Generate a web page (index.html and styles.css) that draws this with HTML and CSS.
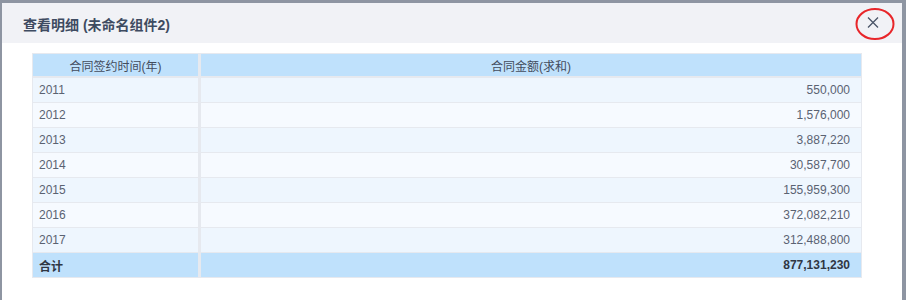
FILE: index.html
```html
<!DOCTYPE html>
<html lang="zh">
<head>
<meta charset="utf-8">
<link rel="stylesheet" href="styles.css">
</head>
<body>
<div class="dialog">
  <div class="dialog-header">
    <div class="title">查看明细 (未命名组件2)</div>
    <div class="close">
      <svg width="44" height="36" viewBox="0 0 44 36">
        <ellipse cx="22" cy="19" rx="18.5" ry="15" fill="none" stroke="#e8262a" stroke-width="2"/>
        <path d="M15 12.5 L25 22.5 M25 12.5 L15 22.5" stroke="#4a5568" stroke-width="1.3" fill="none"/>
      </svg>
    </div>
  </div>
  <div class="dialog-body">
    <div class="table">
      <div class="row head"><div class="cell c1">合同签约时间(年)</div><div class="cell c2">合同金额(求和)</div></div>
      <div class="row odd"><div class="cell">2011</div><div class="cell num">550,000</div></div>
      <div class="row even"><div class="cell">2012</div><div class="cell num">1,576,000</div></div>
      <div class="row odd"><div class="cell">2013</div><div class="cell num">3,887,220</div></div>
      <div class="row even"><div class="cell">2014</div><div class="cell num">30,587,700</div></div>
      <div class="row odd"><div class="cell">2015</div><div class="cell num">155,959,300</div></div>
      <div class="row even"><div class="cell">2016</div><div class="cell num">372,082,210</div></div>
      <div class="row odd"><div class="cell">2017</div><div class="cell num">312,488,800</div></div>
      <div class="row total"><div class="cell">合计</div><div class="cell num">877,131,230</div></div>
    </div>
  </div>
</div>
</body>
</html>
```
FILE: styles.css
```css
html, body {
  margin: 0;
  padding: 0;
}
body {
  background: #8e95a2;
  width: 906px;
  height: 300px;
  overflow: hidden;
  font-family: "Liberation Sans", "Noto Sans CJK SC", sans-serif;
}
.dialog {
  margin: 3px 4px 0 2px;
  width: 900px;
  height: 297px;
  background: #ffffff;
}
.dialog-header {
  height: 40px;
  background: #f1f2f6;
  display: flex;
  align-items: center;
  justify-content: space-between;
  padding: 0 5px 0 21px;
}
.title {
  font-size: 14px;
  font-weight: bold;
  color: #3e4b61;
  padding-top: 1px;
}
.close {
  width: 44px;
  height: 36px;
}
.close svg {
  display: block;
}
.dialog-body {
  padding: 10px 0 0 30px;
}
.table {
  width: 830px;
  border: 1px solid #e6e9ef;
  box-sizing: border-box;
  background: #e6e9ef;
  display: flex;
  flex-direction: column;
  gap: 1px;
  font-size: 12px;
}
.row {
  display: grid;
  grid-template-columns: 165px 1fr;
  column-gap: 3px;
  height: 24px;
}
.row.head {
  height: 22px;
  margin-bottom: 1px;
}
.cell {
  display: flex;
  align-items: center;
  padding: 0 6px;
  color: #5a6272;
}
.head .cell {
  background: #bfe1fc;
  justify-content: center;
  color: #434c5c;
}
.odd .cell { background: #eef6fe; }
.even .cell { background: #f6faff; }
.total .cell {
  background: #bfe1fc;
  font-weight: bold;
  color: #2f3643;
}
.num {
  justify-content: flex-end;
  padding-right: 11px;
}
```
